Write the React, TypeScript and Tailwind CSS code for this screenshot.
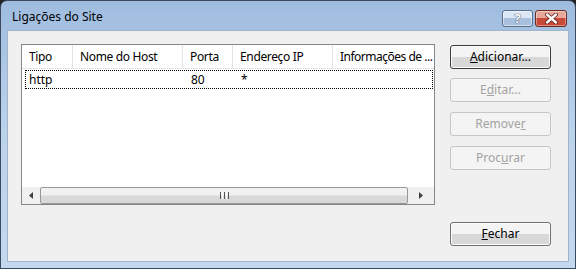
import React from 'react';

const font = { fontFamily: '"Noto Sans", "Open Sans", sans-serif' };

function WinButton({
  children,
  disabled,
  isDefault,
  className = '',
}: {
  children: React.ReactNode
  disabled?: boolean
  isDefault?: boolean
  className?: string
}) {
  return (
    <button
      type="button"
      disabled={disabled}
      className={
        'w-[101px] h-[24px] rounded-[3px] text-[12px] leading-none flex items-center justify-center ' +
        (disabled
          ? 'border border-[#c6c6c6] bg-[#f4f4f4] text-[#a3a3a3] '
          : isDefault
            ? 'border border-[#3c3c3c] bg-gradient-to-b from-[#f4f4f4] from-50% to-[#d8d8d8] to-50% text-black shadow-[inset_0_0_0_1px_#fbfbfb] '
            : 'border border-[#707070] bg-gradient-to-b from-[#f4f4f4] from-50% to-[#d8d8d8] to-50% text-black shadow-[inset_0_0_0_1px_#fbfbfb] ') +
        className
      }
    >
      {children}
    </button>
  );
}

const columns = [
  { label: 'Tipo', w: 'w-[51px] border-r' },
  { label: 'Nome do Host', w: 'w-[110px] border-r' },
  { label: 'Porta', w: 'w-[50px] border-r' },
  { label: 'Endereço IP', w: 'w-[100px] border-r' },
  { label: 'Informações de ...', w: 'flex-1 tracking-[-0.5px]' },
];

export default function App() {
  return (
    <div style={font} className="w-[576px] h-[269px] bg-[#222] select-none">
      <div className="w-full h-full border border-[#3b4a5c] rounded-t-[7px] bg-gradient-to-b from-[#9fbcdf] via-[#bcd3ec] to-[#c4d8ee] flex flex-col overflow-hidden">
        {/* Barra de título */}
        <div className="h-[29px] flex items-center pl-[11px] pr-[8px] pt-[2px]">
          <span className="text-[12px] text-black">Ligações do Site</span>
          <div className="ml-auto flex gap-[2px] -mt-[2px] self-start pt-[9px]">
            <div className="w-[31px] h-[17px] rounded-[3px] border border-[#5a6f8c] bg-gradient-to-b from-[#dbe7f5] from-45% to-[#a8c0de] to-45% flex items-center justify-center shadow-[inset_0_0_0_1px_#ffffff80]">
              <span className="text-[13px] font-bold text-white leading-none [text-shadow:0_0_1px_#33475f,0_0_1px_#33475f]">?</span>
            </div>
            <div className="w-[32px] h-[17px] rounded-[3px] border border-[#6b2a22] bg-gradient-to-b from-[#e7a89a] from-45% to-[#c8493a] to-45% flex items-center justify-center shadow-[inset_0_0_0_1px_#ffffff60]">
              <svg width="13" height="11" viewBox="0 0 13 11">
                <path d="M2 1.5 L11 9.5 M11 1.5 L2 9.5" stroke="#5a1d14" strokeWidth="4" strokeLinecap="round" />
                <path d="M2 1.5 L11 9.5 M11 1.5 L2 9.5" stroke="#ffffff" strokeWidth="2.4" strokeLinecap="round" />
              </svg>
            </div>
          </div>
        </div>

        {/* Área cliente */}
        <div className="flex-1 mx-[6px] mb-[6px] bg-[#f0f0f0] border border-[#9fb3cb] flex px-[13px] pt-[13px]">
          {/* Lista */}
          <div className="w-[414px] h-[161px] border border-[#828790] bg-white flex flex-col text-[12px]">
            <div className="h-[24px] flex border-b border-[#e5e5e5] tracking-[-0.35px]">
              {columns.map((c) => (
                <div
                  key={c.label}
                  className={c.w + ' h-full flex items-center pl-[7px] border-[#e3e5e8] whitespace-nowrap overflow-hidden text-black'}
                >
                  {c.label}
                </div>
              ))}
            </div>
            <div className="mt-[1px] ml-[3px] mr-[1px] h-[19px] flex items-center border border-dotted border-black text-black">
              <span className="w-[48px] pl-[3px]">http</span>
              <span className="w-[110px]" />
              <span className="w-[50px] pl-[7px]">80</span>
              <span className="pl-[7px]">*</span>
            </div>
            <div className="flex-1" />
            {/* Barra de rolagem */}
            <div className="h-[17px] flex bg-[#f0f0f0]">
              <div className="w-[18px] h-full flex items-center justify-center">
                <svg width="4" height="7" viewBox="0 0 4 7"><path d="M4 0 L0 3.5 L4 7 Z" fill="#404040" /></svg>
              </div>
              <div className="flex-1 h-full rounded-[2px] border border-[#979797] bg-gradient-to-b from-[#f1f1f1] from-45% to-[#d9d9d9] to-55% flex items-center justify-center">
                <div className="flex gap-[1px]">
                  <div className="w-[1px] h-[7px] bg-[#555]" />
                  <div className="w-[1px] h-[7px] bg-[#fff]" />
                  <div className="w-[1px] h-[7px] bg-[#555]" />
                  <div className="w-[1px] h-[7px] bg-[#fff]" />
                  <div className="w-[1px] h-[7px] bg-[#555]" />
                </div>
              </div>
              <div className="w-[26px] h-full flex items-center justify-center">
                <svg width="4" height="7" viewBox="0 0 4 7"><path d="M0 0 L4 3.5 L0 7 Z" fill="#404040" /></svg>
              </div>
            </div>
          </div>

          {/* Botões */}
          <div className="ml-[15px] flex flex-col">
            <WinButton isDefault className="mt-[1px]">
              <span><u>A</u>dicionar...</span>
            </WinButton>
            <WinButton disabled className="mt-[9px]">
              <span>E<u>d</u>itar...</span>
            </WinButton>
            <WinButton disabled className="mt-[10px]">
              <span>Remove<u>r</u></span>
            </WinButton>
            <WinButton disabled className="mt-[10px]">
              <span>Proc<u>u</u>rar</span>
            </WinButton>
            <WinButton className="mt-[52px]">
              <span><u>F</u>echar</span>
            </WinButton>
          </div>
        </div>
      </div>
    </div>
  );
}
